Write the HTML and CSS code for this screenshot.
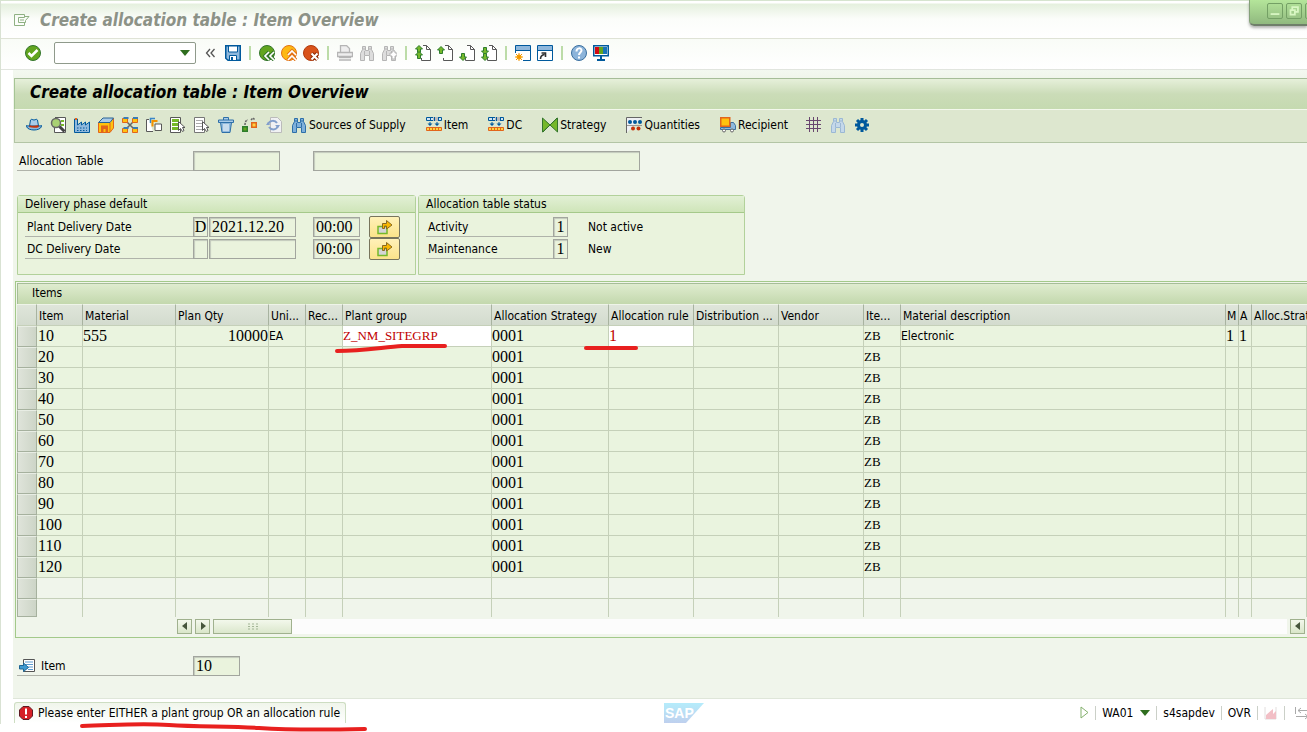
FILE: index.html
```html
<!DOCTYPE html>
<html lang="en">
<head>
  <meta charset="UTF-8">
  <title>Create allocation table : Item Overview</title>
  <link rel="stylesheet" href="styles.css">
</head>
<body>
  <!-- shared icons -->
  <svg class="sprite" width="0" height="0">
    <symbol id="binoculars" viewBox="0 0 16 16">
      <path d="M1.5 15.500v-7l2-4v-3h3v4h3v-4h3v3l2 4v7h-4v-5h-5v5z" fill="var(--fill)" stroke="var(--line)"/>
      <path d="M5.500 6v4M10.500 6v4M3.500 4h3M9.500 4h3" stroke="var(--line)" fill="none"/>
    </symbol>
    <symbol id="page" viewBox="0 0 16 16">
      <path d="M8 .5h3.500l4 4v11h-9V13" fill="#fff" stroke="#585858"/>
      <path d="M11.500 .5v4h4" fill="none" stroke="#585858"/>
    </symbol>
    <symbol id="up" viewBox="0 0 8 8">
      <path d="M4 .5L7.500 4H5.500v3.500h-3V4H.5z" fill="#76b82a" stroke="#2d7d2d"/>
    </symbol>
    <symbol id="down" viewBox="0 0 8 8">
      <path d="M4 7.500L.5 4h2V.5h3V4h2z" fill="#76b82a" stroke="#2d7d2d"/>
    </symbol>
    <symbol id="grid-arrows" viewBox="0 0 16 16">
      <path d="M.5 .5h15v3H.5z" fill="#cfe3f3" stroke="#00599c"/>
      <path d="M7 0h5v4H7z" fill="#bbb"/>
      <path d="M4.500 0v4M8.500 0v4M12.500 0v4" stroke="#00599c"/>
      <path d="M4 5v3M11 5v3" stroke="#00599c"/>
      <path d="M1.500 6.500h5L4 9zM8.500 6.500h5L11 9z" fill="#00599c"/>
      <path d="M.5 10.500h15v3H.5z" fill="#ffd23e" stroke="#e2651b"/>
      <path d="M3.500 10v3M6.500 10v3M9.500 10v3M12.500 10v3" stroke="#e2651b"/>
    </symbol>
    <symbol id="copy-to" viewBox="0 0 16 16">
      <path d="M1 7.500h9v7H1z" fill="#d5d5d5" stroke="#76b82a" stroke-width="1.500"/>
      <path d="M5.500 9.500v-5h4v-3l5.500 4.500-5.500 4v-3h-2v2.500z" fill="#fbb800" stroke="#8a6a20"/>
    </symbol>
  </svg>

  <div class="window">
    <div class="window-buttons">
      <button aria-label="Minimize"><svg viewBox="0 0 16 16"><path d="M3 11.500h10" stroke="#d9f7c4" stroke-width="2"/></svg></button>
      <button aria-label="Restore"><svg viewBox="0 0 16 16"><path d="M6 6V3.500h6.500V9H10M4 7h5v5H4z" fill="none" stroke="#d9f7c4" stroke-width="2"/></svg></button>
      <button aria-label="Close"></button>
    </div>

    <header class="title-bar">
      <svg class="menu-icon" viewBox="0 0 16 14"><path d="M10.500 4V1.500H.5v11h10V10M4.500 9.500v-5h6v-1h4.500l-3.500 4v2zM6 7h4" fill="none" stroke="#8fb183"/></svg>
      <span class="window-title">Create allocation table : Item Overview</span>
    </header>

    <div class="system-bar">
      <button class="icon" aria-label="Enter"><svg viewBox="0 0 16 16"><circle cx="8" cy="8" r="7.500" fill="#62a51f" stroke="#33752c"/><path d="M3.500 8l3 3 6-6" fill="none" stroke="#fff" stroke-width="2.500"/></svg></button>
      <div class="command">
        <select aria-label="Command"><option></option></select>
        <svg class="caret" viewBox="0 0 10 6"><path d="M0 0h10L5 6z" fill="#2f6e1f"/></svg>
      </div>
      <button class="icon" aria-label="Collapse"><svg viewBox="0 0 16 16"><path d="M7 4L3.500 8 7 12M11.500 4L8 8l3.500 4" fill="none" stroke="#555" stroke-width="1.300"/></svg></button>
      <button class="icon" aria-label="Save"><svg viewBox="0 0 16 16"><path d="M.75 .75h14.500v14.500H3l-2.250-2z" fill="#8fb8dc" stroke="#00599c" stroke-width="1.500"/><path d="M3.500 1h9v6h-9z" fill="#fff" stroke="#00599c"/><path d="M4.500 15v-4.500h7V15" fill="#fff" stroke="#00599c"/><path d="M6 12h2v3H6z" fill="#00599c"/></svg></button>
      <span class="sep"></span>
      <button class="icon" aria-label="Back"><svg viewBox="0 0 16 16"><circle cx="8" cy="8" r="7.500" fill="#62a51f" stroke="#33752c"/><path d="M10 7L6 11l4 4M15 7l-4 4 4 4" fill="none" stroke="#33752c" stroke-width="3.500"/><path d="M10 7L6 11l4 4M15 7l-4 4 4 4" fill="none" stroke="#fff" stroke-width="1.700"/></svg></button>
      <button class="icon" aria-label="Exit"><svg viewBox="0 0 16 16"><circle cx="8" cy="8" r="7.500" fill="#fdb913" stroke="#e37216"/><path d="M7 10l4-4 4 4M7 15l4-4 4 4" fill="none" stroke="#e37216" stroke-width="3.500"/><path d="M7 10l4-4 4 4M7 15l4-4 4 4" fill="none" stroke="#fff" stroke-width="1.700"/></svg></button>
      <button class="icon" aria-label="Cancel"><svg viewBox="0 0 16 16"><circle cx="8" cy="8" r="7.500" fill="#d9531a" stroke="#b03a0d"/><path d="M8.500 8.500l6 6M14.500 8.500l-6 6" stroke="#8f2c08" stroke-width="4"/><path d="M8.500 8.500l6 6M14.500 8.500l-6 6" stroke="#fff" stroke-width="2"/></svg></button>
      <span class="sep"></span>
      <button class="icon" aria-label="Print" disabled><svg viewBox="0 0 16 16"><path d="M3.500 7V.5h6l3 3V7M.5 7.500h15v4H.5zM2.500 11.500h11v1h-11zM2 15h12" fill="#eee" stroke="#b5b5b5" stroke-width="1.300"/></svg></button>
      <button class="icon off" aria-label="Find" disabled><svg><use href="#binoculars"/></svg></button>
      <button class="icon off" aria-label="Find next" disabled><svg viewBox="0 0 16 16"><use href="#binoculars" width="16" height="16"/><path d="M9 8h2V6h3v2h2v3h-2v3h-3v-3H9z" fill="#fff" stroke="#b5b5b5"/></svg></button>
      <span class="sep"></span>
      <button class="icon" aria-label="First page"><svg viewBox="0 0 16 16"><use href="#page" width="16" height="16"/><use href="#up" width="8" height="8"/><use href="#up" y="6" width="8" height="8"/></svg></button>
      <button class="icon" aria-label="Previous page"><svg viewBox="0 0 16 16"><use href="#page" width="16" height="16"/><use href="#up" y="1" width="8" height="8"/></svg></button>
      <button class="icon" aria-label="Next page"><svg viewBox="0 0 16 16"><use href="#page" width="16" height="16"/><use href="#down" y="8" width="8" height="8"/></svg></button>
      <button class="icon" aria-label="Last page"><svg viewBox="0 0 16 16"><use href="#page" width="16" height="16"/><use href="#down" y="2" width="8" height="8"/><use href="#down" y="8" width="8" height="8"/></svg></button>
      <span class="sep"></span>
      <button class="icon" aria-label="New session"><svg viewBox="0 0 16 16"><path d="M.5 .5h15v15H.5z" fill="#fff" stroke="#00599c"/><path d="M1 1h14v4H1z" fill="#8fb8dc"/><path d="M.5 5.500h15" stroke="#00599c"/><path d="M0 8h8v8H0z" fill="#fff"/><circle cx="4" cy="12" r="2.500" fill="#fbb800"/><path d="M4 8v8M0 12h8M1 9l6 6M7 9l-6 6" stroke="#f39200"/></svg></button>
      <button class="icon" aria-label="Shortcut"><svg viewBox="0 0 16 16"><path d="M.5 .5h15v15H.5z" fill="#fff" stroke="#00599c"/><path d="M1 1h14v4H1z" fill="#8fb8dc"/><path d="M.5 5.500h15" stroke="#00599c"/><path d="M3.500 14c0-3 1-4 4-4.500M4.500 8h4v4" fill="none" stroke="#333" stroke-width="1.600"/></svg></button>
      <span class="sep"></span>
      <button class="icon" aria-label="Help"><svg viewBox="0 0 16 16"><circle cx="8" cy="8" r="7.500" fill="#8cb4da" stroke="#3a6f9f"/><path d="M5.500 6.500c0-4 5-4 5-1 0 2-2.500 2-2.500 4.500M8 11.500v2" fill="none" stroke="#fff" stroke-width="2"/></svg></button>
      <button class="icon" aria-label="Customize layout"><svg viewBox="0 0 16 16"><path d="M.75 .75h14.500v10H.75z" fill="#fff" stroke="#00599c" stroke-width="1.500"/><path d="M2 2h4v7H2z" fill="#d20a11"/><path d="M6 2h4v7H6z" fill="#62a51f"/><path d="M10 2h4v7h-4z" fill="#1874b8"/><path d="M8 11v3M4 15h8" stroke="#00599c" stroke-width="2"/></svg></button>
    </div>

    <main class="content">
      <h1 class="app-title">Create allocation table : Item Overview</h1>

      <div class="app-bar">
        <div class="app-icons">
          <button class="icon" aria-label="Header"><svg viewBox="0 0 16 16"><path d="M.5 8.500c2 1 13 1 15 0 .5 6-15.500 6-15 0z" fill="#8fb8dc" stroke="#00599c"/><path d="M3.500 9l1-6c1-1.500 2 0 3.500 0s2.500-1.500 3.500 0l1 6z" fill="#a9cbe8" stroke="#00599c"/><path d="M3.500 9c2 1 7 1 9 0" fill="none" stroke="#c4320a" stroke-width="2"/></svg></button>
          <button class="icon" aria-label="Details"><svg viewBox="0 0 16 16"><path d="M5 .5h10.500v15H4.500V9" fill="#fff" stroke="#585858"/><path d="M11 3h3v2h-3zM11 7h3v2h-3z" fill="#76b82a"/><circle cx="6" cy="6" r="4.500" fill="#a9d173" stroke="#666" stroke-width="1.500"/><path d="M9.500 9.500l5 5" stroke="#444" stroke-width="3"/></svg></button>
          <button class="icon" aria-label="Plants"><svg viewBox="0 0 16 16"><path d="M.5 15.500V2h3v6l4-3v3l4-3v3l4-3v10.500z" fill="#8fb8dc" stroke="#00599c"/><path d="M3 11h10M3 13.500h10" stroke="#00599c" stroke-dasharray="1.500 1.500"/><path d="M1 1h2v2H1z" fill="#e2651b"/></svg></button>
          <button class="icon" aria-label="Distribution center"><svg viewBox="0 0 16 16"><path d="M.5 15.500V6L5 1.500h10.500V11L12 15.500z" fill="#ffc20e" stroke="#e2651b"/><path d="M.5 5.500L5 1h10.500L12 5.500z" fill="#a9cbe8" stroke="#2a6294"/><path d="M12 6v9" stroke="#e2651b"/><path d="M3 15V8.500h7V15H7.500v-3h-2v3z" fill="#e2651b"/></svg></button>
          <button class="icon" aria-label="Plant groups"><svg viewBox="0 0 16 16"><path d="M5 5l6 6M11 5l-6 6" stroke="#666" stroke-width="1.500"/><path d="M.5 1.500h5v4h-5zM10.500 1.500h5v4h-5zM.5 11.500h5v4h-5zM10.500 11.500h5v4h-5z" fill="#ffc20e" stroke="#e2651b"/><path d="M1.500 1h5M11 1h5M1.500 11h5M11 11h5" stroke="#3a7db5" stroke-width="2"/></svg></button>
          <button class="icon" aria-label="Copy"><svg viewBox="0 0 16 16"><path d="M3 2.500H.5v12H7" fill="#fff" stroke="#585858"/><path d="M4.500 6V1.500H9" fill="none" stroke="#3a86c8" stroke-width="1.500"/><path d="M6.500 9.500V4h5" fill="none" stroke="#f39200" stroke-width="2"/><path d="M9 7h6.500v6.500H9z" fill="#fff" stroke="#585858"/></svg></button>
          <button class="icon" aria-label="Select all"><svg viewBox="0 0 16 16"><path d="M.5 .5h10v15H.5z" fill="#fff" stroke="#585858"/><path d="M2 2h7v3H2zM2 6h7v3H2zM2 10h7v3H2z" fill="#76b82a"/><path d="M8.500 4.500v9l2-2 2 3 1.500-1-1.500-3h2.500z" fill="#fff" stroke="#555"/></svg></button>
          <button class="icon" aria-label="Deselect all"><svg viewBox="0 0 16 16"><path d="M.5 .5h10v15H.5z" fill="#fff" stroke="#777"/><path d="M2 3.500h7M2 6.500h7M2 9.500h7M2 12.500h7" stroke="#aaa"/><path d="M8.500 4.500v9l2-2 2 3 1.500-1-1.500-3h2.500z" fill="#fff" stroke="#555"/></svg></button>
          <button class="icon" aria-label="Delete"><svg viewBox="0 0 16 16"><path d="M2.500 5.500h11L12 15.500H4z" fill="#8fb8dc" stroke="#2d6fa8"/><path d="M.5 3h15v2.500H.5zM5.500 3V.5h5V3" fill="#a9cbe8" stroke="#2d6fa8"/><path d="M6 7v7M8 7v7M10 7v7" stroke="#fff"/></svg></button>
          <button class="icon" aria-label="Split"><svg viewBox="0 0 16 16"><path d="M3 8c0-3 1-5 3-5M9 3l2-2 2 2" fill="none" stroke="#666" stroke-width="1.500" stroke-dasharray="2 1"/><path d="M.75 9.750h4.500v4.500H.75z" fill="#62a51f" stroke="#2d7d2d" stroke-width="1.500"/><path d="M9.750 5.750h4.500v4.500h-4.500z" fill="#ffd23e" stroke="#e2651b" stroke-width="1.500"/></svg></button>
          <button class="icon" aria-label="Refresh"><svg viewBox="0 0 16 16"><path d="M4.500 .5h7l4 4v11h-11z" fill="#f0f1f3" stroke="#bbb"/><path d="M2 7c2-4 7-4 9-1M12 9c-2 5-7 4-9 1" fill="none" stroke="#839fcb" stroke-width="2"/><path d="M0 8l4 0-2-3zM14 8l-5 0 3 3z" fill="#839fcb"/></svg></button>
        </div>
        <div class="app-actions">
          <button class="action"><svg class="blue"><use href="#binoculars"/></svg>Sources of Supply</button>
          <button class="action"><svg><use href="#grid-arrows"/></svg>Item</button>
          <button class="action"><svg><use href="#grid-arrows"/></svg>DC</button>
          <button class="action"><svg viewBox="0 0 16 16"><path d="M.5 1l7.500 7 7.500-7v14L8 8 .5 15z" fill="#76b82a" stroke="#33752c"/><path d="M1 15L15 1" stroke="#33752c"/></svg>Strategy</button>
          <button class="action"><svg viewBox="0 0 16 16"><path d="M.5 16V.5H16" fill="#eef0f4" stroke="#666"/><g fill="#00599c"><circle cx="4" cy="5" r="2"/><circle cx="9" cy="5" r="2"/><circle cx="14" cy="5" r="2"/></g><path d="M1 8.500h15" stroke="#999"/><g fill="#c4320a"><circle cx="7" cy="11.500" r="2"/><circle cx="12.500" cy="11.500" r="2"/></g></svg>Quantities</button>
          <button class="action"><svg viewBox="0 0 16 16"><path d="M10.500 5.500h3l2 3v4H.5v-2h10z" fill="#8fb8dc" stroke="#3a6f9f"/><path d="M.75 .75h9v8.500h-9z" fill="#ffc20e" stroke="#e2651b" stroke-width="1.500"/><circle cx="4" cy="13.500" r="1.500" fill="#fff" stroke="#666"/><circle cx="12" cy="13.500" r="1.500" fill="#fff" stroke="#666"/></svg>Recipient</button>
        </div>
        <div class="app-icons">
          <button class="icon" aria-label="Grid"><svg viewBox="0 0 16 16"><path d="M3.500 0v15M7.500 0v15M11.500 0v15M0 3.500h15M0 7.500h15M0 11.500h15" stroke="#69466f"/></svg></button>
          <button class="icon pale" aria-label="Find" disabled><svg><use href="#binoculars"/></svg></button>
          <button class="icon" aria-label="Settings"><svg viewBox="0 0 16 16"><path d="M8 1v14M1 8h14M3 3l10 10M13 3L3 13" stroke="#00599c" stroke-width="3"/><circle cx="8" cy="8" r="5" fill="#00599c"/><circle cx="8" cy="8" r="2" fill="#dde7cf"/></svg></button>
        </div>
      </div>

      <div class="screen">
        <div class="field-row head-row">
          <label class="label" for="table-no">Allocation Table</label>
          <input class="field w-date" id="table-no" readonly>
          <input class="field w-long" aria-label="Description" readonly>
        </div>

        <div class="groups">
          <section class="group group-wide">
            <h2>Delivery phase default</h2>
            <div class="field-row">
              <label class="label" for="plant-date">Plant Delivery Date</label>
              <input class="field w-char" aria-label="Plant date type" value="D" readonly>
              <input class="field w-date" id="plant-date" value="2021.12.20" readonly>
              <input class="field w-time" aria-label="Plant time" value="00:00" readonly>
              <button class="copy" aria-label="Copy plant date"><svg><use href="#copy-to"/></svg></button>
            </div>
            <div class="field-row">
              <label class="label" for="dc-date">DC Delivery Date</label>
              <input class="field w-char" aria-label="DC date type" readonly>
              <input class="field w-date" id="dc-date" readonly>
              <input class="field w-time" aria-label="DC time" value="00:00" readonly>
              <button class="copy" aria-label="Copy DC date"><svg><use href="#copy-to"/></svg></button>
            </div>
          </section>
          <section class="group group-status">
            <h2>Allocation table status</h2>
            <div class="field-row">
              <label class="label" for="activity">Activity</label>
              <input class="field w-char" id="activity" value="1" readonly>
              <span class="note">Not active</span>
            </div>
            <div class="field-row">
              <label class="label" for="maintenance">Maintenance</label>
              <input class="field w-char" id="maintenance" value="1" readonly>
              <span class="note">New</span>
            </div>
          </section>
        </div>

        <section class="items">
          <h2>Items</h2>
          <table>
            <colgroup>
              <col class="c-sel"><col class="c-item"><col class="c-mat"><col class="c-mat"><col class="c-unit"><col class="c-unit">
              <col class="c-group"><col class="c-strategy"><col class="c-rule"><col class="c-rule"><col class="c-rule"><col class="c-unit">
              <col class="c-desc"><col class="c-flag"><col class="c-flag"><col>
            </colgroup>
            <thead>
              <tr>
                <th></th><th>Item</th><th>Material</th><th>Plan Qty</th><th>Uni...</th><th>Rec...</th>
                <th>Plant group</th><th>Allocation Strategy</th><th>Allocation rule</th><th>Distribution ...</th><th>Vendor</th><th>Ite...</th>
                <th>Material description</th><th class="flag">M</th><th class="flag">A</th><th class="last">Alloc.Strat</th>
              </tr>
            </thead>
            <tbody id="rows"></tbody>
          </table>
          <div class="scroll">
            <button class="scroll-btn" aria-label="Scroll left"><svg viewBox="0 0 6 8"><path d="M5 0v8L0 4z"/></svg></button>
            <button class="scroll-btn" aria-label="Scroll right"><svg viewBox="0 0 6 8"><path d="M1 0v8l5-4z"/></svg></button>
            <div class="track"><div class="thumb"><svg viewBox="0 0 10 7"><path d="M0 1h10M0 3.500h10M0 6h10" stroke="#a3b596" stroke-dasharray="2"/></svg></div></div>
            <button class="scroll-btn" aria-label="Scroll left from end"><svg viewBox="0 0 6 8"><path d="M5 0v8L0 4z"/></svg></button>
          </div>
        </section>

        <div class="field-row foot-row">
          <label class="label" for="position"><svg viewBox="0 0 16 16"><path d="M4.500 1.500h11v12h-11z" fill="#fff" stroke="#555"/><path d="M6 4h8M6 6.500h8M9 9h5M9 11.500h5" stroke="#5a9bd0"/><path d="M.5 7.500h4V5l5 4.500-5 4V11h-4z" fill="#3d9ad1" stroke="#1f6795"/></svg>Item</label>
          <input class="field w-time" id="position" value="10" readonly>
        </div>
      </div>
    </main>

    <footer class="status-bar">
      <div class="message-side">
        <div class="message">
          <svg class="error-icon" viewBox="0 0 14 14"><path d="M4 .5h6L13.500 4v6L10 13.500H4L.5 10V4z" fill="#d51f26" stroke="#5e1a22"/><path d="M7 2.500v6M7 10v2" stroke="#fff" stroke-width="2"/></svg>
          Please enter EITHER a plant group OR an allocation rule
          <svg class="mark mark-message" viewBox="0 0 290 10"><path d="M3 4C40 3 60 1 90 3S150 4 180 6 240 8 286 7"/></svg>
        </div>
      </div>
      <svg class="logo" viewBox="0 0 40 20">
        <defs><linearGradient id="sap" x2="0" y2="1"><stop offset="0" stop-color="#b5ecfb"/><stop offset="1" stop-color="#bfd0ee"/></linearGradient></defs>
        <path d="M0 0h40L22 20H0z" fill="url(#sap)"/>
        <text x="1" y="15" class="logo-text">SAP</text>
      </svg>
      <div class="system-info">
        <svg class="play" viewBox="0 0 9 13"><path d="M1 1v11l7-5.500z" fill="#fff" stroke="#83b06c"/></svg>
        <span class="info-sep"></span>
        <div class="session">
          <select aria-label="Transaction"><option>WA01</option></select>
          <svg class="caret" viewBox="0 0 10 6"><path d="M0 0h10L5 6z" fill="#2f6e1f"/></svg>
        </div>
        <span class="info-sep"></span>
        <span>s4sapdev</span>
        <span class="info-sep"></span>
        <span>OVR</span>
        <span class="info-sep"></span>
        <svg class="lock" viewBox="0 0 14 14"><path d="M1 1v12h11V1" fill="none" stroke="#e2dede"/><path d="M2 13V9L9 3v5l3-3v8z" fill="#f2bfc6"/></svg>
        <span class="info-sep"></span>
        <svg class="transfer" viewBox="0 0 16 14"><path d="M.5 1v7M3 4.500h12M6 2L3 4.500 6 7M1 10.500h12M10 8l3 2.500-3 2.500" fill="none" stroke="#aaa"/></svg>
      </div>
    </footer>
  </div>

  <script src="rows.js"></script>
</body>
</html>
```
FILE: styles.css
```css
* {
  box-sizing: border-box;
}

body {
  margin: 0;
  min-height: 100vh;
  background: #fff;
  font-family: "DejaVu Sans Condensed", "DejaVu Sans", Tahoma, sans-serif;
  font-size: 12px;
  color: #000;
  overflow: hidden;
}

h1, h2 {
  margin: 0;
  font-weight: normal;
}

button, input, select {
  margin: 0;
  padding: 0;
  border: none;
  border-radius: 0;
  background: none;
  font: inherit;
  color: inherit;
}

svg {
  display: block;
  flex: none;
}

.sprite {
  position: absolute;
}

.window {
  position: relative;
  border-left: 1px solid #d9e2d3;
  border-top: 1px solid #d6e4cf;
}

/* window corner */
.window-buttons {
  position: absolute;
  top: -1px;
  right: 0;
  display: flex;
  gap: 3px;
  width: 58px;
  height: 26px;
  padding: 3px 0 0 17px;
  overflow: hidden;
  background: linear-gradient(#b4e59a, #90b97f);
  border-left: 1px solid #84a079;
  border-bottom: 2px solid #6f7f6a;
  border-bottom-left-radius: 5px;
  box-shadow: 0 2px 3px rgba(0, 0, 0, 0.3);
}

.window-buttons button {
  flex: none;
  width: 16px;
  height: 16px;
  border: 1px solid #74a065;
  border-radius: 2px;
}

.title-bar {
  display: flex;
  align-items: center;
  gap: 10px;
  height: 38px;
  padding-left: 13px;
  background: linear-gradient(#fff 2px, #e5f0de 3px, #fbfdfa 18px, #fff);
  border-bottom: 1px solid #dfe3d6;
}

.menu-icon {
  width: 16px;
  height: 14px;
}

.window-title, .app-title {
  font-size: 17px;
  font-weight: bold;
  font-style: italic;
}

.window-title {
  color: #8c9287;
}

.system-bar {
  display: flex;
  align-items: center;
  gap: 6px;
  height: 31px;
  padding: 0 24px 2px;
  background: linear-gradient(#f9fcf7, #fff);
  border-bottom: 1px solid #e1e5de;
}

.icon {
  flex: none;
  width: 16px;
  height: 16px;
}

.icon svg, .action svg, .copy svg {
  width: 16px;
  height: 16px;
}

.icon.off {
  --fill: #ddd;
  --line: #b5b5b5;
}

.icon.pale {
  --fill: #c4d8ea;
  --line: #9bb8d4;
}

.blue {
  --fill: #7fb0db;
  --line: #2d6fa8;
}

.sep {
  width: 2px;
  height: 14px;
  margin: 0 2px;
  background: #bcdca8;
}

.command {
  position: relative;
  width: 142px;
  height: 22px;
  margin: 0 1px 0 7px;
}

.command select {
  display: block;
  appearance: none;
  width: 100%;
  height: 100%;
  background: #fff;
  border: 1px solid #8f9a8b;
  border-radius: 2px;
}

.caret {
  width: 10px;
  height: 6px;
  pointer-events: none;
}

.command .caret {
  position: absolute;
  top: 8px;
  right: 6px;
}

/* application area */
.content {
  margin-left: 12px;
  background: linear-gradient(#f3f8f0, #f0f5eb 8px);
  padding-top: 8px;
  border-bottom: 1px solid #dfe6d9;
}

.app-title {
  height: 32px;
  margin-left: 1px;
  padding-left: 15px;
  line-height: 26px;
  background: linear-gradient(#e6f0da, #cbdcb8 50%, #c5dab0);
  border-top: 1px solid #a6bd98;
  border-left: 1px solid #a6c595;
  border-bottom: 1px solid #f3f8ec;
}

.app-bar {
  display: flex;
  align-items: center;
  gap: 18px;
  height: 33px;
  margin-left: 1px;
  padding: 0 0 2px 11px;
  background: #dde7cf;
  border-left: 1px solid #b3c5a5;
  border-bottom: 1px solid #b3c5a5;
}

.app-icons {
  display: flex;
  gap: 8px;
}

.app-icons + .app-actions {
  margin-left: -9px;
}

.app-actions {
  display: flex;
  gap: 20px;
}

.action {
  display: flex;
  align-items: center;
  gap: 2px;
  white-space: nowrap;
}

.screen {
  padding: 7px 0 21px 4px;
}

.field-row {
  display: flex;
  align-items: center;
  height: 22px;
}

.label {
  display: flex;
  align-items: center;
  width: 168px;
  height: 20px;
  padding-left: 2px;
  border-bottom: 1px solid #b0b3aa;
}

.head-row .label, .foot-row .label {
  width: 176px;
}

.field {
  height: 20px;
  padding: 0 2px;
  background: #eaf3dd;
  border: 1px solid #a2a59e;
  box-shadow: inset 1px 1px 1px #c3c9bc;
  font-family: "Liberation Serif", serif;
  font-size: 16px;
}

.w-char {
  width: 15px;
  padding: 0;
  text-align: center;
}

.w-date {
  width: 87px;
}

.w-char + .w-date {
  margin-left: 1px;
}

.w-time {
  width: 47px;
}

.w-date + .w-time {
  margin-left: 17px;
}

.w-long {
  width: 327px;
  margin-left: 33px;
}

.copy {
  display: flex;
  align-items: center;
  justify-content: center;
  width: 31px;
  height: 22px;
  margin-left: 9px;
  background: linear-gradient(#fff1b8, #fbe38a);
  border: 1px solid #77745c;
  border-radius: 2px;
}

.groups {
  display: flex;
  gap: 2px;
  margin-top: 23px;
}

.group {
  height: 80px;
  background: #eaf3dd;
  border: 1px solid #b2d19a;
  border-radius: 3px 3px 0 0;
}

.group h2 {
  height: 17px;
  margin-bottom: 3px;
  padding-left: 7px;
  font-size: 12px;
  line-height: 16px;
  background: linear-gradient(#e2f0d5, #cfe5b9);
  border-bottom: 1px solid #a5c98a;
}

.group .field-row {
  padding-left: 7px;
}

.group-wide {
  width: 399px;
}

.group-status {
  width: 327px;
}

.group-status .label {
  width: 127px;
}

.note {
  margin-left: 20px;
}

/* items table */
.items {
  margin: 6px 0 0 -2px;
  padding: 1px 0 2px 1px;
  border: 1px solid #a3c98a;
  border-right: none;
}

.items h2 {
  height: 21px;
  padding-left: 14px;
  font-size: 12px;
  line-height: 18px;
  background: linear-gradient(#dfeccf, #c3d8ad);
  border-top: 1px solid #a6bd98;
  border-left: 1px solid #a6bd98;
}

table {
  width: 100%;
  table-layout: fixed;
  border-collapse: separate;
  border-spacing: 0;
}

th, td {
  height: 21px;
  padding: 0;
  border-right: 1px solid #c5d0b9;
  border-bottom: 1px solid #c5d0b9;
  font-weight: normal;
  text-align: left;
  white-space: nowrap;
  overflow: hidden;
}

thead th {
  height: 22px;
  padding: 1px 0 0 2px;
  background: linear-gradient(#dfe5da, #d3dbce);
  border-right-color: #a8b3a0;
  border-top: 1px solid #eef4e8;
}

thead .flag {
  padding-left: 1px;
}

thead .last {
  border-right: none;
  overflow: visible;
}

tbody th {
  background: linear-gradient(90deg, #dfe4da, #cdd5c7);
  border: 1px solid #a6b19e;
  border-top-color: #e8ede4;
}

tbody td {
  position: relative;
  background: #eaf4df;
}

tbody td:nth-child(2) {
  padding-left: 1px;
}

tbody .empty td {
  background: #f0f5eb;
}

tbody .empty:last-child td {
  height: 18px;
  border-bottom: none;
}

tbody .empty:last-child th {
  height: 18px;
}

.num, .code {
  font-family: "Liberation Serif", serif;
  font-size: 16px;
  line-height: 18px;
}

.code {
  font-size: 13px;
  line-height: 20px;
}

.right {
  text-align: right;
}

td.input {
  background: #fff;
  overflow: visible;
}

td.input input {
  display: block;
  width: 100%;
  height: 20px;
  color: #c00000;
}

.c-sel { width: 20px; }
.c-item { width: 46px; }
.c-mat { width: 93px; }
.c-unit { width: 37px; }
.c-group { width: 149px; }
.c-strategy { width: 117px; }
.c-rule { width: 85px; }
.c-desc { width: 325px; }
.c-flag { width: 13px; }

/* hand-drawn marks */
.mark {
  position: absolute;
  z-index: 1;
  fill: none;
  stroke: #e8201f;
  stroke-width: 4;
  stroke-linecap: round;
  pointer-events: none;
}

.mark-group {
  top: 17px;
  left: -9px;
  width: 114px;
  height: 12px;
}

.mark-rule {
  top: 18px;
  left: -26px;
  width: 56px;
  height: 8px;
}

.mark-message {
  top: 19px;
  left: 64px;
  width: 290px;
  height: 10px;
}

.scroll {
  display: flex;
  align-items: center;
  gap: 3px;
  height: 18px;
  margin: 0 2px 0 160px;
}

.scroll-btn {
  display: flex;
  align-items: center;
  justify-content: center;
  flex: none;
  width: 15px;
  height: 15px;
  background: linear-gradient(#f3f8ec, #d9e6c9);
  border: 1px solid #a0b18e;
}

.scroll-btn svg {
  width: 6px;
  height: 8px;
  fill: #46563c;
}

.track {
  flex: 1;
  height: 15px;
  background: #fcfcfc;
}

.thumb {
  display: flex;
  align-items: center;
  justify-content: center;
  width: 79px;
  height: 15px;
  background: linear-gradient(#f3f8ec, #dbe7cc);
  border: 1px solid #a0b18e;
}

.thumb svg {
  width: 10px;
  height: 7px;
}

.foot-row {
  margin-top: 17px;
}

.foot-row svg {
  width: 16px;
  height: 16px;
  margin-right: 6px;
}

/* status bar */
.status-bar {
  display: flex;
  align-items: center;
  height: 25px;
  padding: 2px 0 0 13px;
}

.message-side {
  display: flex;
  flex: 14 1 0;
}

.message {
  position: relative;
  display: flex;
  align-items: center;
  gap: 5px;
  height: 21px;
  padding: 0 5px 0 4px;
  background: linear-gradient(#f0f5eb, #fff);
  border: 1px solid #cdddc2;
  border-bottom: none;
  border-radius: 3px 3px 0 0;
  white-space: nowrap;
}

.error-icon {
  width: 14px;
  height: 14px;
}

.logo {
  width: 40px;
  height: 20px;
}

.logo-text {
  font: bold 14px "Liberation Sans", sans-serif;
  fill: #fff;
}

.system-info {
  display: flex;
  flex: 13 1 0;
  align-items: center;
  justify-content: flex-end;
  gap: 6px;
  height: 20px;
  overflow: hidden;
}

.info-sep {
  width: 1px;
  height: 14px;
  background: #cbd0c8;
}

.session {
  display: flex;
  align-items: center;
  gap: 6px;
}

.session select {
  appearance: none;
}

.play {
  width: 9px;
  height: 13px;
}

.lock {
  width: 14px;
  height: 14px;
}

.transfer {
  width: 16px;
  height: 14px;
  margin: 0 -4px 0 4px;
}
```
FILE: rows.js
```javascript
const ROW_COUNT = 14;
const ITEM_COUNT = 12;
const markGroup = '<svg class="mark mark-group" viewBox="0 0 114 12"><path d="M3 8C30 8 50 4 68 3H111"/></svg>';
const markRule = '<svg class="mark mark-rule" viewBox="0 0 56 8"><path d="M3 4H53"/></svg>';

let html = "";
for (let i = 1; i <= ROW_COUNT; i++) {
  if (i > ITEM_COUNT) {
    html += '<tr class="empty"><th></th>' + "<td></td>".repeat(15) + "</tr>";
    continue;
  }
  const first = i === 1;
  html += `<tr>
    <th></th>
    <td class="num">${i * 10}</td>
    <td class="num">${first ? "555" : ""}</td>
    <td class="num right">${first ? "10000" : ""}</td>
    <td>${first ? "EA" : ""}</td>
    <td></td>
    ${first ? `<td class="code input"><input aria-label="Plant group" value="Z_NM_SITEGRP">${markGroup}</td>` : "<td></td>"}
    <td class="num">0001</td>
    ${first ? `<td class="num input"><input aria-label="Allocation rule" value="1">${markRule}</td>` : "<td></td>"}
    <td></td>
    <td></td>
    <td class="code">ZB</td>
    <td>${first ? "Electronic" : ""}</td>
    <td class="num">${first ? "1" : ""}</td>
    <td class="num">${first ? "1" : ""}</td>
    <td></td>
  </tr>`;
}
document.getElementById("rows").innerHTML = html;
```
